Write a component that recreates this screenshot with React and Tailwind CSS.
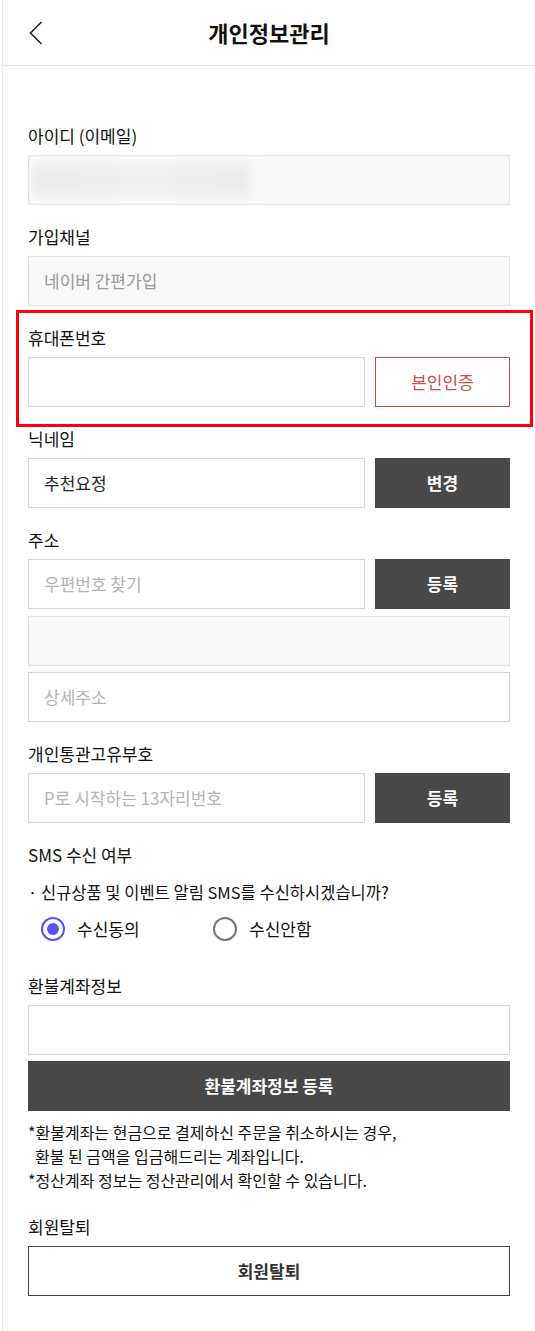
export default function App() {
  const label = 'block text-[17px] leading-6 text-[#111]'
  const inputBase = 'h-[50px] border px-[15px] flex items-center text-[17px]'
  const readOnly = `${inputBase} bg-[#f8f8f8] border-[#e3e3e3]`
  const editable = `${inputBase} bg-white border-[#d6d6d6]`
  const darkBtn = 'h-[50px] w-[135px] shrink-0 bg-[#484848] text-white text-[17px] font-bold flex items-center justify-center'

  return (
    <div className="min-h-[1331px] bg-white font-['Noto_Sans_CJK_KR','Noto_Sans',sans-serif]">
      <div className="ml-[2px] min-h-[1331px] border-l border-[#ececec]">
        {/* Header */}
        <header className="h-[66px] border-b border-[#e6e6e6] grid grid-cols-[60px_1fr_60px] items-center">
          <button className="pl-[25px] flex items-center">
            <svg width="16" height="26" viewBox="0 0 16 26" fill="none">
              <path d="M13.5 2 L2.5 13 L13.5 24" stroke="#222" strokeWidth="1.6" />
            </svg>
          </button>
          <h1 className="text-center text-[22px] font-bold text-[#111] leading-none -mt-[1px]">개인정보관리</h1>
          <div />
        </header>

        <div className="pl-[25px] pr-[25px] pt-[58px] pb-10">
          {/* 아이디 */}
          <section>
            <span className={`${label} mb-[7px]`}>아이디 (이메일)</span>
            <div className={readOnly}>
              <div className="h-[30px] w-[215px] -ml-[10px] bg-gradient-to-r from-[#e9e9e9] via-[#efefef] to-[#eaeaea] blur-[6px]" />
            </div>
          </section>

          {/* 가입채널 */}
          <section className="mt-5">
            <span className={`${label} mb-[7px]`}>가입채널</span>
            <div className={`${readOnly} text-[#999]`}>네이버 간편가입</div>
          </section>

          {/* 휴대폰번호 */}
          <section className="mt-5 relative">
            <span className={`${label} mb-[7px]`}>휴대폰번호</span>
            <div className="flex gap-[10px]">
              <div className={`${editable} flex-1`} />
              <button className="h-[50px] w-[135px] shrink-0 border border-[#c9494b] text-[#d14a4a] text-[17px] flex items-center justify-center">
                본인인증
              </button>
            </div>
            <div className="absolute -left-3 -right-[23px] -top-4 -bottom-5 border-[3px] border-[#ff0010] pointer-events-none" />
          </section>

          {/* 닉네임 */}
          <section className="mt-5">
            <span className={`${label} mb-[7px]`}>닉네임</span>
            <div className="flex gap-[10px]">
              <div className={`${editable} flex-1 text-[#222]`}>추천요정</div>
              <button className={darkBtn}>변경</button>
            </div>
          </section>

          {/* 주소 */}
          <section className="mt-5">
            <span className={`${label} mb-[7px]`}>주소</span>
            <div className="flex gap-[10px]">
              <div className={`${editable} flex-1 text-[#b3b3b3]`}>우편번호 찾기</div>
              <button className={darkBtn}>등록</button>
            </div>
            <div className={`${readOnly} mt-[7px]`} />
            <div className={`${editable} mt-[6px] text-[#b3b3b3]`}>상세주소</div>
          </section>

          {/* 개인통관고유부호 */}
          <section className="mt-5">
            <span className={`${label} mb-[7px]`}>개인통관고유부호</span>
            <div className="flex gap-[10px]">
              <div className={`${editable} flex-1 text-[#b3b3b3]`}>P로 시작하는 13자리번호</div>
              <button className={darkBtn}>등록</button>
            </div>
          </section>

          {/* SMS */}
          <section className="mt-5">
            <span className={label}>SMS 수신 여부</span>
            <p className="mt-[13px] text-[16.5px] leading-6 text-[#111]">· 신규상품 및 이벤트 알림 SMS를 수신하시겠습니까?</p>
            <div className="mt-[13px] pl-[13px] flex">
              <label className="w-[172px] flex items-center gap-3">
                <span className="w-6 h-6 rounded-full border-[2.5px] border-[#5a52f2] flex items-center justify-center">
                  <span className="w-[12px] h-[12px] rounded-full bg-[#5a52f2]" />
                </span>
                <span className="text-[17px] leading-6 text-[#111]">수신동의</span>
              </label>
              <label className="flex items-center gap-3">
                <span className="w-6 h-6 rounded-full border-2 border-[#767676]" />
                <span className="text-[17px] leading-6 text-[#111]">수신안함</span>
              </label>
            </div>
          </section>

          {/* 환불계좌정보 */}
          <section className="mt-[33px]">
            <span className={`${label} mb-[7px]`}>환불계좌정보</span>
            <div className={editable} />
            <button className="mt-[6px] w-full h-[50px] bg-[#484848] text-white text-[17px] font-bold">
              환불계좌정보 등록
            </button>
            <div className="mt-[9px] text-[16px] leading-6 text-[#111]">
              <p>*환불계좌는 현금으로 결제하신 주문을 취소하시는 경우,</p>
              <p className="pl-[7px]">환불 된 금액을 입금해드리는 계좌입니다.</p>
              <p>*정산계좌 정보는 정산관리에서 확인할 수 있습니다.</p>
            </div>
          </section>

          {/* 회원탈퇴 */}
          <section className="mt-[23px]">
            <span className={`${label} mb-[7px]`}>회원탈퇴</span>
            <button className="w-full h-[50px] border-[1.5px] border-[#444] text-[#333] text-[17px] font-bold">
              회원탈퇴
            </button>
          </section>
        </div>
      </div>
    </div>
  )
}
